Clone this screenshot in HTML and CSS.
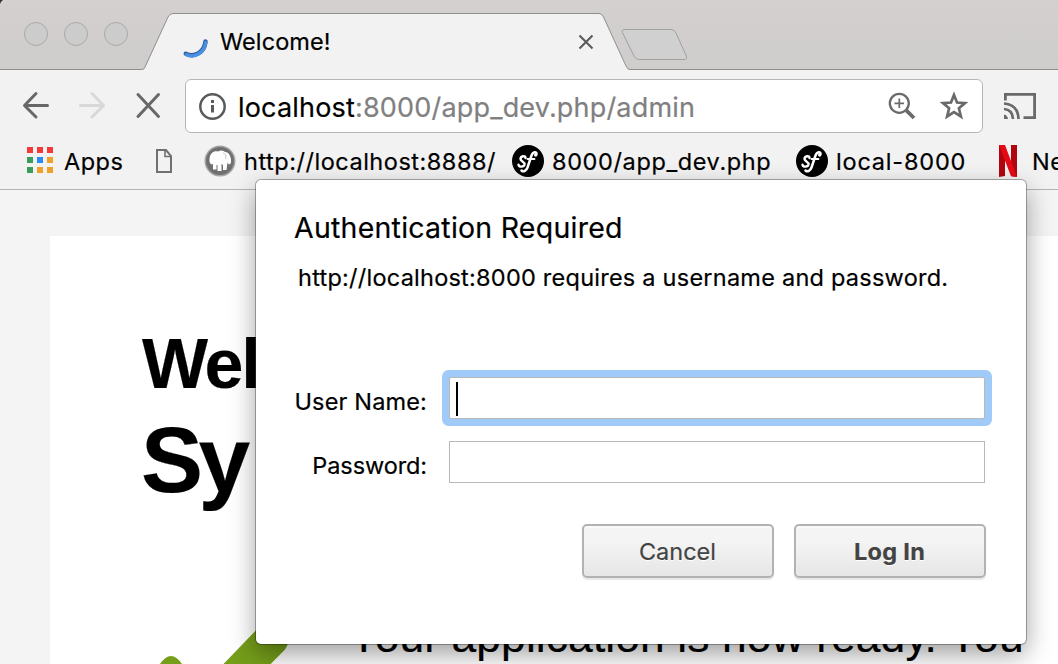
FILE: index.html
```html
<!DOCTYPE html>
<html lang="en">
<head>
<meta charset="utf-8">
<title>Welcome!</title>
<link rel="stylesheet" href="styles.css">
</head>
<body>
<div class="browser">
  <header class="tabstrip">
    <svg class="tab-shapes" width="1058" height="70" viewBox="0 0 1058 70" fill="none">
      <path d="M0 0H3Q1 1 0 4Z" fill="#3b2b2e"/>
      <path d="M0 69.5H144L168 17Q170 13.5 173 13.5H599Q602 13.5 603.5 17L628 69.5H1058V70H0Z" fill="#f2f2f2"/>
      <path d="M0 69.5H142Q144 69.5 145 67L168 17Q170 13.5 173 13.5H599Q602 13.5 603.5 17L626 66Q627.500 69.500 630 69.500H1058" stroke="#8f8e8e"/>
      <path d="M625 29.500H671Q674 29.500 676 33L686.300 56Q687.500 59.500 684 59.500H639Q636 59.500 634 56L622.500 32.500Q621.500 29.500 625 29.500Z" fill="#d0d0d0" stroke="#a1a0a0"/>
    </svg>
    <div class="lights"><i></i><i></i><i></i></div>
    <svg class="spinner" width="26" height="24" viewBox="0 0 26 24" fill="none" stroke-linecap="round">
      <path d="M3.800 17.800C13 22 22.500 16 23.500 5.500" stroke="#315f9d" stroke-width="4.500"/>
      <path d="M4.500 18.800C13 22.500 22.500 16.500 23.800 6.500" stroke="#4a90e2" stroke-width="3.400"/>
    </svg>
    <span class="tab-title">Welcome!</span>
    <svg class="tab-close" width="16" height="16" viewBox="0 0 16 16" stroke="#5a5a5a" stroke-width="2.100"><path d="M1.500 1.500L14.500 14.500M14.500 1.500L1.500 14.500"/></svg>
  </header>

  <nav class="toolbar">
    <svg class="nav-icons" width="185" height="60" viewBox="0 0 185 60" fill="none" stroke-width="3" stroke-linecap="round" stroke-linejoin="round">
      <path d="M36 15.500L24.500 27.500L36 39M25 27.500H47.500M138 16.500L158.500 38.500M158.500 16.500L138 38.500" transform="translate(0 8)" stroke="#686868"/>
      <path d="M92 15.500L103.500 27.500L92 39M80.500 27.500H103" transform="translate(0 8)" stroke="#d8d8d8"/>
    </svg>
    <div class="omnibox">
      <svg class="info" width="28" height="28" viewBox="0 0 28 28" fill="none"><circle cx="14.500" cy="14.500" r="12.200" stroke="#5a5a5a" stroke-width="2.500"/><path d="M14.500 13V20.500M14.500 8V11" stroke="#5a5a5a" stroke-width="3"/></svg>
      <span class="url"><b>localhost</b>:8000/app_dev.php/admin</span>
      <svg class="mag" width="28" height="28" viewBox="0 0 28 28" fill="none" stroke="#6a6a6a"><circle cx="11.300" cy="11.300" r="9.500" stroke-width="2.300"/><path d="M6.500 11.300H16M11.300 6.500V16" stroke-width="1.700"/><path d="M18.300 18.300L26 26" stroke-width="3.800"/></svg>
      <svg class="star" width="30" height="30" viewBox="0 0 30 30" fill="none" stroke="#6a6a6a" stroke-width="2.700"><path d="M15 4L18 11.500L26 12.100L19.900 17.200L21.900 25.500L15 21.100L8.100 25.500L10.100 17.200L4 12.100L12 11.500Z"/></svg>
    </div>
    <svg class="cast" width="34" height="28" viewBox="0 0 34 28" fill="none" stroke="#6a6a6a" stroke-width="2.800"><path d="M2.400 8.500V2.400H31.600V25.600H20.500"/><path d="M1 11.500Q15 12.500 15.500 27M1 17Q9.500 17.500 10 27" stroke-width="2.700"/><path d="M1 22.500Q4.500 23 5 27H1Z" fill="#6a6a6a" stroke="none"/></svg>
  </nav>

  <div class="bookmarks">
    <div class="apps-grid"><i class="r"></i><i class="r"></i><i class="r"></i><i class="g"></i><i class="b"></i><i class="o"></i><i class="g"></i><i class="o"></i><i class="o"></i></div>
    <span class="bm t-apps">Apps</span>
    <svg class="page-icon" width="18" height="26" viewBox="0 0 18 26" fill="none" stroke="#707070" stroke-width="2"><path d="M2 2H11L16 8V24H2Z"/><path d="M10 2V8.500H16" stroke-width="1.600"/></svg>
    <svg class="mamp" width="32" height="32" viewBox="0 0 32 32"><circle cx="16" cy="16" r="15.500" fill="#a5a5a5"/><circle cx="16" cy="16" r="14" fill="#707070"/><path d="M5.500 14C6 8 10 5.500 14 6.500C17 4.500 20 5.500 21 7C25 7 27.500 12 27 17C26.500 20 24.500 20 23.500 17.500L22.500 25H19V20L17.500 19V26H13.500V20H12.500V24.500H9V19C6.500 20.500 5 17 5.500 14Z" fill="#fff"/><path d="M19 8Q23 9 21.500 14" fill="none" stroke="#c9c9c9"/></svg>
    <span class="bm t-8888">http://localhost:8888/</span>
    <svg class="sf sf1" width="32" height="32" viewBox="0 0 32 32"><circle cx="16" cy="16" r="16"/><g fill="none" stroke="#fff" stroke-linecap="round"><path d="M13.500 13C14 10 8.500 11 8.500 14C8.500 16.500 13 16.500 12.500 19.500C12 22 7 22.500 6.500 19.800" stroke-width="2.400"/><path d="M24.500 9C25 6.500 21 6.500 19.500 10.500L15.500 22.500C14.500 25.500 11.500 27.500 9.500 25.500" stroke-width="2.500"/><path d="M15.500 14H22.500" stroke-width="1.900"/></g><circle cx="23.700" cy="10" r="1.700" fill="#fff"/></svg>
    <span class="bm t-8000">8000/app_dev.php</span>
    <svg class="sf sf2" width="32" height="32" viewBox="0 0 32 32"><circle cx="16" cy="16" r="16"/><g fill="none" stroke="#fff" stroke-linecap="round"><path d="M13.500 13C14 10 8.500 11 8.500 14C8.500 16.500 13 16.500 12.500 19.500C12 22 7 22.500 6.500 19.800" stroke-width="2.400"/><path d="M24.500 9C25 6.500 21 6.500 19.500 10.500L15.500 22.500C14.500 25.500 11.500 27.500 9.500 25.500" stroke-width="2.500"/><path d="M15.500 14H22.500" stroke-width="1.900"/></g><circle cx="23.700" cy="10" r="1.700" fill="#fff"/></svg>
    <span class="bm t-local">local-8000</span>
    <svg class="netflix" width="18" height="32" viewBox="0 0 18 32"><path d="M0 0H6V31L0 32ZM12 0H18V32L12 31Z" fill="#b1060f"/><path d="M0 0H6L18 32L12 31.300Z" fill="#e50914"/></svg>
    <span class="bm t-net">Netflix</span>
  </div>

  <main class="viewport">
    <section class="sheet">
      <h1 class="headline"><span class="small">Wel</span><span class="big">Sy</span></h1>
      <div class="status">
        <svg class="check" width="150" height="60" viewBox="0 0 150 60"><path d="M18 49Q29 33 40 49L51 60H7ZM81.500 49L119 10L142 22Q149 27 143 34.500L128.700 49L118 60H71Z" fill="#759e1a"/></svg>
        <p class="ready">Your application is now ready. You</p>
      </div>
    </section>
  </main>

  <form class="dialog">
    <h2 class="dialog-title"><span>Authentication Required</span></h2>
    <p class="message"><span>http://localhost:8000 requires a username and password.</span></p>
    <div class="field user"><label><span>User Name:</span></label><div class="input focused"><i class="caret"></i></div></div>
    <div class="field pass"><label><span>Password:</span></label><div class="input"></div></div>
    <div class="actions"><button type="button"><span class="cancel">Cancel</span></button><button type="button" class="primary"><span class="login">Log In</span></button></div>
  </form>
</div>
</body>
</html>
```
FILE: styles.css
```css
* { box-sizing: border-box; }
body { margin: 0; width: 1058px; height: 664px; overflow: hidden; font-family: Inter, "Liberation Sans", sans-serif; color: #000; -webkit-text-stroke: .2px; }
h1, h2, p { margin: 0; font-weight: 400; }
i { display: block; }
svg { display: block; flex: none; }
.browser { position: relative; width: 1058px; height: 664px; overflow: hidden; display: flex; flex-direction: column; background: #f4f4f4; white-space: nowrap; }

/* Tab strip */
.tabstrip { position: relative; flex: none; height: 70px; display: flex; align-items: flex-start; background: linear-gradient(#d3d0cf, #cfcdcc); }
.tab-shapes { position: absolute; left: 0; top: 0; }
.lights, .spinner, .tab-title, .tab-close { position: relative; }
.lights { display: flex; gap: 16px; padding: 22px 0 0 24px; }
.lights i { width: 24px; height: 24px; border: 1px solid #aaa9a9; border-radius: 50%; background: #cdcccc; }
.spinner { margin: 36px 0 0 54px; }
.tab-title { margin: 26px 0 0 12px; width: 357px; font-size: 23.5px; line-height: 32px; letter-spacing: .1px; }
.tab-close { margin: 34px 0 0 1px; }

/* Toolbar */
.toolbar { flex: none; height: 70px; display: flex; align-items: flex-start; background: #f2f2f2; }
.omnibox { width: 798px; height: 54px; margin-top: 9px; display: flex; align-items: center; border: 1px solid #b6b6b6; border-radius: 6px; background: #fff; }
.info { margin-left: 12px; }
.url { margin-left: 12px; padding-top: 2px; width: 650px; font-size: 27px; letter-spacing: .18px; color: #808080; }
.url b { font-weight: 400; color: #000; }
.star { margin-left: 23px; }
.cast { margin: 22px 0 0 20px; }

/* Bookmarks */
.bookmarks { flex: none; height: 50px; display: flex; background: #f2f2f2; border-bottom: 1px solid #b4b4b4; }
.bm { flex: none; font-size: 23.5px; line-height: 32px; padding-top: 6px; }
.apps-grid { flex: none; margin: 7px 0 0 27px; width: 26px; height: 26px; display: grid; grid-template-columns: repeat(3, 6px); grid-auto-rows: 6px; gap: 4px; }
.r { background: #f5393b; } .g { background: #3a9d5c; } .b { background: #258cf4; } .o { background: #f0a128; }
.t-apps { width: 91px; margin-left: 11px; letter-spacing: .5px; }
.page-icon { margin-top: 8px; }
.mamp { margin: 5px 0 0 31px; }
.t-8888 { width: 268px; margin-left: 8px; letter-spacing: .52px; }
.sf { margin-top: 5px; }
.t-8000 { width: 244px; margin-left: 8px; letter-spacing: .62px; }
.t-local { width: 163px; margin-left: 8px; letter-spacing: .8px; }
.netflix { margin-top: 5px; }
.t-net { margin-left: 15px; letter-spacing: .5px; }

/* Page */
.viewport { flex: 1; min-height: 0; padding: 46px 0 0 50px; }
.sheet { height: 440px; padding: 94px 0 0 92px; background: #fff; font-family: "Liberation Sans", Arial, sans-serif; }
.headline { display: flex; flex-direction: column; font-weight: 700; }
.small { font-size: 70px; line-height: 68px; letter-spacing: -2.2px; }
.big { font-size: 93px; line-height: 92px; margin: 16px 0 0 -1px; letter-spacing: -4.5px; }
.status { display: flex; margin-top: 109px; }
.ready { margin: -3px 0 0 57px; font-size: 44.4px; line-height: 50px; letter-spacing: .1px; }

/* Dialog */
.dialog { position: absolute; left: 256px; top: 180px; width: 770px; height: 464px; padding: 30px 40px 0 38px; background: #fff; border-radius: 5px; box-shadow: 0 0 0 1px rgba(0,0,0,.3), 0 10px 26px rgba(0,0,0,.38); }
.dialog-title { font-size: 28.5px; line-height: 36px; letter-spacing: .24px; }
.message { margin-top: 16px; padding-left: 4px; font-size: 23.5px; line-height: 32px; letter-spacing: .24px; }
.field { display: flex; height: 42px; margin-top: 22px; }
.field.user { margin-top: 83px; }
label { width: 155px; padding: 9px 22px 0 0; text-align: right; font-size: 23.5px; line-height: 32px; }
.user label { letter-spacing: .15px; }
.pass label { letter-spacing: -.1px; }
.input { width: 536px; border: 1px solid #b8b8b8; background: #fff; }
.focused { box-shadow: 0 0 0 7px #a0cbf8; border-radius: 2px; padding: 4px 6px; }
.caret { width: 2px; height: 34px; background: #000; }
.actions { display: flex; justify-content: flex-end; gap: 20px; margin-top: 41px; }
button { width: 192px; height: 54px; padding: 2px 1px 0 0; border: 2px solid #b2b2b2; border-radius: 5px; background: linear-gradient(#f4f4f4 30%, #e6e6e6); box-shadow: 0 2px 1px #e8e8e8, inset 0 2px 1px #fafafa; font-family: Inter, sans-serif; font-size: 23.5px; line-height: 32px; color: #434343; text-shadow: 0 1px 0 #fff; }
.primary { font-weight: 700; letter-spacing: .3px; }
```
